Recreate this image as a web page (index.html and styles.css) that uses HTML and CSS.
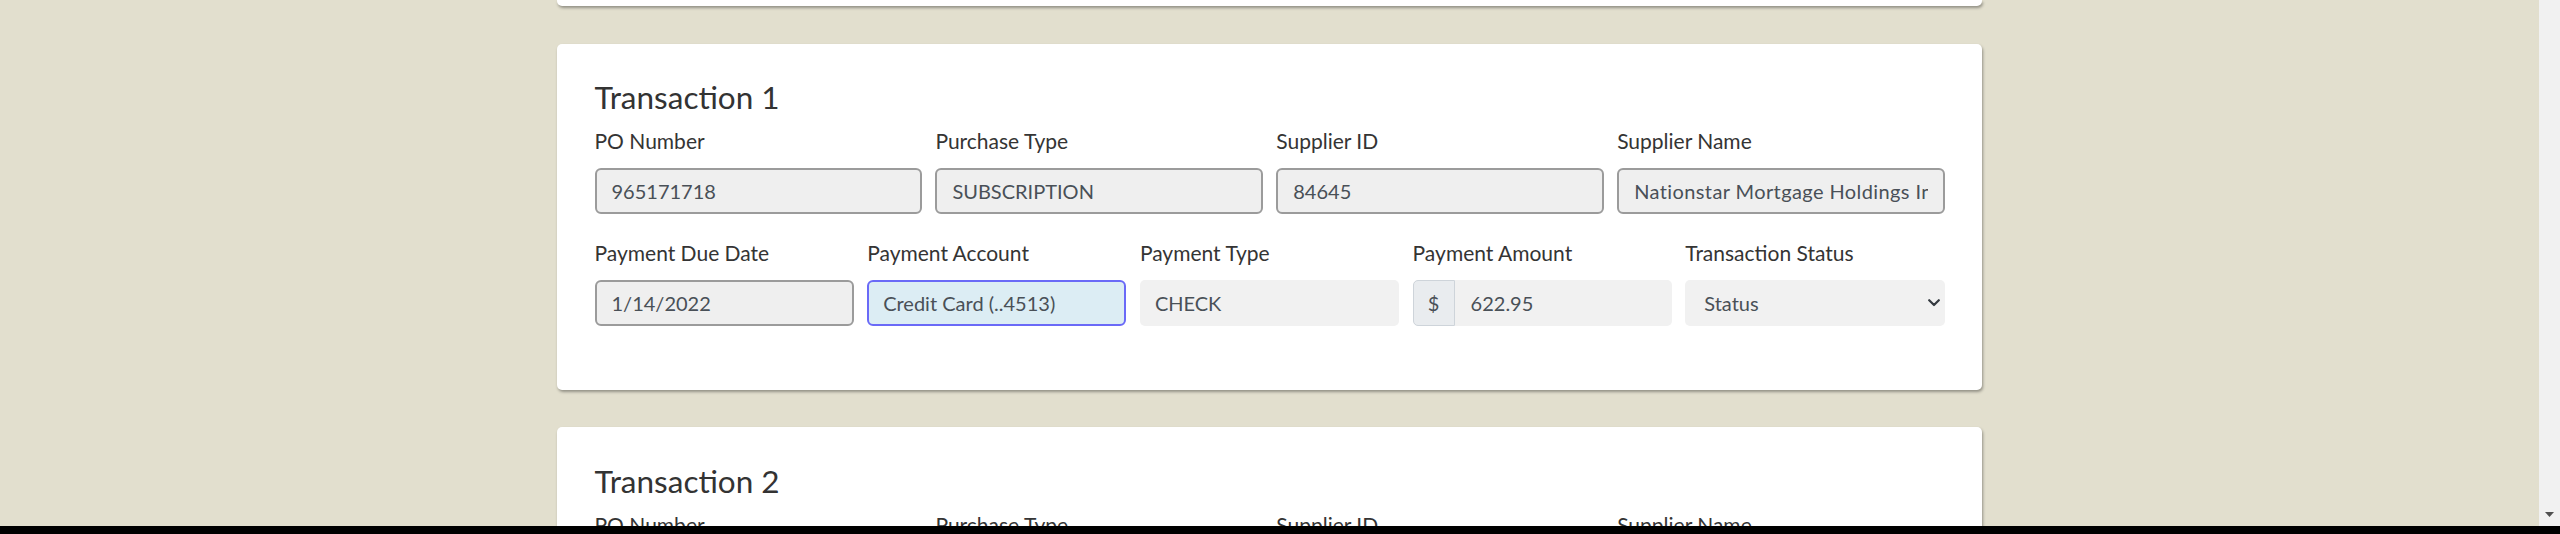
FILE: index.html
```html
<!DOCTYPE html>
<html lang="en">
<head>
<meta charset="utf-8">
<title>Transactions</title>
<link rel="stylesheet" href="styles.css">
</head>
<body>
<div class="viewport">
  <main class="page">
    <div class="card card-prev"></div>

    <section class="card">
      <h2 class="title">Transaction 1</h2>
      <div class="grid grid-4">
        <div class="field">
          <label class="label">PO Number</label>
          <input class="ctl ctl-ro" value="965171718" readonly>
        </div>
        <div class="field">
          <label class="label">Purchase Type</label>
          <input class="ctl ctl-ro" value="SUBSCRIPTION" readonly>
        </div>
        <div class="field">
          <label class="label">Supplier ID</label>
          <input class="ctl ctl-ro" value="84645" readonly>
        </div>
        <div class="field">
          <label class="label">Supplier Name</label>
          <input class="ctl ctl-ro ctl-wide" value="Nationstar Mortgage Holdings Inc." readonly>
        </div>
      </div>
      <div class="grid grid-5">
        <div class="field">
          <label class="label">Payment Due Date</label>
          <input class="ctl ctl-ro" value="1/14/2022" readonly>
        </div>
        <div class="field">
          <label class="label">Payment Account</label>
          <input class="ctl ctl-focus" value="Credit Card (..4513)" readonly>
        </div>
        <div class="field">
          <label class="label">Payment Type</label>
          <input class="ctl ctl-plain" value="CHECK" readonly>
        </div>
        <div class="field">
          <label class="label">Payment Amount</label>
          <div class="group">
            <span class="addon">$</span>
            <input class="ctl ctl-plain ctl-grouped" value="622.95" readonly>
          </div>
        </div>
        <div class="field">
          <label class="label">Transaction Status</label>
          <div class="ctl ctl-plain ctl-select">
            <span>Status</span>
            <svg class="chev" width="12" height="8" viewBox="0 0 12 8"><polyline points="1.2,1.2 6,6 10.8,1.2" fill="none" stroke="#343a40" stroke-width="2.2" stroke-linecap="round" stroke-linejoin="round"/></svg>
          </div>
        </div>
      </div>
    </section>

    <section class="card">
      <h2 class="title">Transaction 2</h2>
      <div class="grid grid-4">
        <div class="field">
          <label class="label">PO Number</label>
          <input class="ctl ctl-ro" value="" readonly>
        </div>
        <div class="field">
          <label class="label">Purchase Type</label>
          <input class="ctl ctl-ro" value="" readonly>
        </div>
        <div class="field">
          <label class="label">Supplier ID</label>
          <input class="ctl ctl-ro" value="" readonly>
        </div>
        <div class="field">
          <label class="label">Supplier Name</label>
          <input class="ctl ctl-ro" value="" readonly>
        </div>
      </div>
    </section>
  </main>
</div>
<div class="scrollbar">
  <svg class="scroll-arrow" width="9" height="5" viewBox="0 0 9 5"><polygon points="0,0 9,0 4.5,5" fill="#505050"/></svg>
</div>
<div class="bottombar"></div>
</body>
</html>
```
FILE: styles.css
```css
html, body {
  margin: 0;
  padding: 0;
  height: 534px;
  overflow: hidden;
}
body {
  background: #e2dfce;
  font-family: Lato, "Liberation Sans", sans-serif;
  color: #343434;
}
.viewport {
  width: calc(100% - 21px);
}
.page {
  width: 1425px;
  margin: 0 auto;
  display: flex;
  flex-direction: column;
  gap: 37.5px;
}
.card {
  background: #fff;
  border-radius: 5px;
  box-shadow: 1px 2px 3px rgba(0, 0, 0, 0.35);
  padding: 35.5px 37.5px 63.5px 37.5px;
}
.card-prev {
  height: 6px;
  padding: 0;
  border-radius: 0 0 5px 5px;
}
.title {
  margin: 0 0 10px 0;
  font-size: 31.5px;
  line-height: 37px;
  font-weight: 400;
  color: #333;
}
.grid {
  display: grid;
  column-gap: 13.5px;
}
.grid + .grid {
  margin-top: 24px;
}
.grid-4 { grid-template-columns: repeat(4, 1fr); }
.grid-5 { grid-template-columns: repeat(5, 1fr); }
.field {
  display: flex;
  flex-direction: column;
  min-width: 0;
}
.label {
  font-size: 21px;
  line-height: 30px;
  margin-bottom: 12px;
  color: #343434;
}
.ctl {
  box-sizing: border-box;
  height: 46px;
  width: 100%;
  margin: 0;
  font-family: Lato, "Liberation Sans", sans-serif;
  font-size: 20px;
  line-height: 30px;
  color: #495057;
  outline: none;
}
.ctl-wide {
  letter-spacing: 0.4px;
}
.ctl-ro {
  background: #efefef;
  border: 2px solid #9b9b9b;
  border-radius: 6px;
  padding: 6px 15px;
}
.ctl-focus {
  background: #dcedf4;
  border: 2px solid #6a6af7;
  border-radius: 6px;
  padding: 6px 14px;
}
.ctl-plain {
  background: #f1f1f1;
  border: 0;
  border-radius: 5px;
  padding: 8px 15px;
}
.group {
  display: flex;
  height: 46px;
}
.addon {
  box-sizing: border-box;
  width: 42px;
  flex: none;
  display: flex;
  align-items: center;
  justify-content: center;
  background: #e9ecef;
  border: 1px solid #ced4da;
  border-radius: 5px 0 0 5px;
  font-size: 20px;
  color: #495057;
}
.ctl-grouped {
  flex: 1;
  min-width: 0;
  border-radius: 0 5px 5px 0;
  padding-left: 16px;
}
.ctl-select {
  display: flex;
  align-items: center;
  justify-content: space-between;
  padding: 0 5px 0 19px;
}
.chev {
  display: block;
}
.scrollbar {
  position: fixed;
  top: 0;
  right: 0;
  width: 21px;
  height: 526px;
  background: #f1f1f1;
}
.scroll-arrow {
  position: absolute;
  left: 6px;
  bottom: 9px;
  display: block;
}
.bottombar {
  position: fixed;
  left: 0;
  right: 0;
  bottom: 0;
  height: 8px;
  background: #000;
}
```
